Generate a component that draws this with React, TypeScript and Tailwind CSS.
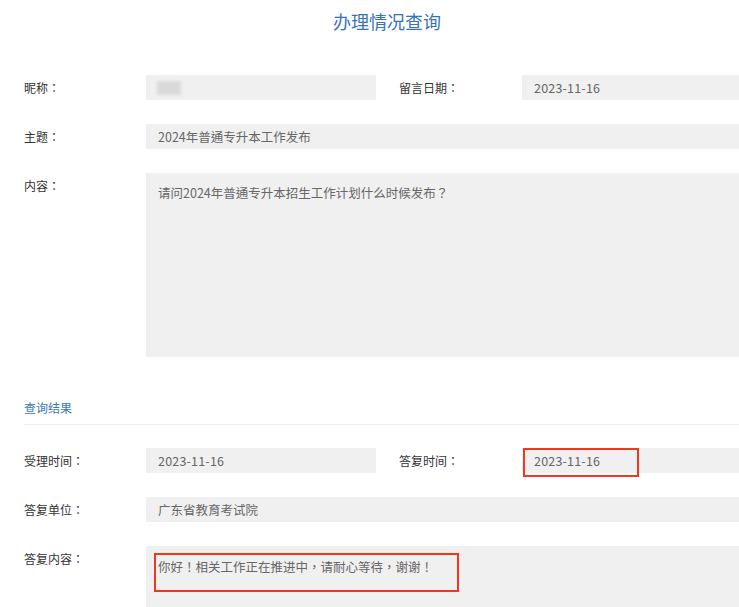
const font = { fontFamily: '"Noto Sans CJK TC", "Noto Sans CJK SC", "Noto Sans", sans-serif' };

function Label({ children, w = 'w-[146px] pl-[24px]' }: { children: React.ReactNode; w?: string }) {
  return <div className={`${w} shrink-0 h-[25px] leading-[25px] text-[12px] text-[#333]`}>{children}</div>;
}

function Field({ children, className = '' }: { children?: React.ReactNode; className?: string }) {
  return (
    <div className={`relative h-[25px] leading-[25px] bg-[#f0f0f0] px-3 text-[12.5px] text-[#666] ${className}`}>
      {children}
    </div>
  );
}

export default function App() {
  return (
    <div className="w-[739px] h-[607px] overflow-hidden bg-white" style={font}>
      <h1 className="pt-[8px] pl-[35px] h-[34px] text-center text-[18px] leading-[26px] text-[#3874b4]">办理情况查询</h1>

      <div className="mt-[41px] flex">
        <Label>昵称：</Label>
        <Field className="w-[230px]">
          <div className="absolute left-[11px] top-[6px] w-[24px] h-[14px] bg-[#d9d9d9] blur-[1.5px]" />
        </Field>
        <Label w="w-[123px] ml-[23px]">留言日期：</Label>
        <Field className="flex-1 tracking-[0.2px]">2023-11-16</Field>
      </div>

      <div className="mt-[24px] flex">
        <Label>主题：</Label>
        <Field className="flex-1">2024年普通专升本工作发布</Field>
      </div>

      <div className="mt-[24px] flex">
        <Label>内容：</Label>
        <div className="flex-1 h-[184px] bg-[#f0f0f0] px-3 pt-[12px] text-[12.5px] leading-[16px] text-[#666]">
          请问2024年普通专升本招生工作计划什么时候发布？
        </div>
      </div>

      <div className="mt-[42px] ml-[24px] border-b border-[#ececec] pb-[7px] text-[12px] leading-[18px] text-[#3a78b8]">
        查询结果
      </div>

      <div className="mt-[23px] flex">
        <Label>受理时间：</Label>
        <Field className="w-[230px] tracking-[0.2px]">2023-11-16</Field>
        <Label w="w-[123px] ml-[23px]">答复时间：</Label>
        <Field className="flex-1 tracking-[0.2px]">
          2023-11-16
          <div className="absolute left-[1px] top-0 w-[116px] h-[29px] border-2 border-[#f3361f]" />
        </Field>
      </div>

      <div className="mt-[24px] flex">
        <Label>答复单位：</Label>
        <Field className="flex-1">广东省教育考试院</Field>
      </div>

      <div className="mt-[24px] flex">
        <Label>答复内容：</Label>
        <div className="relative flex-1 h-[184px] bg-[#f0f0f0] px-3 pt-[13px] text-[12.5px] leading-[16px] text-[#666]">
          你好！相关工作正在推进中，请耐心等待，谢谢！
          <div className="absolute left-[8px] top-[7px] w-[305px] h-[39px] border-2 border-[#f3361f]" />
        </div>
      </div>
    </div>
  );
}
